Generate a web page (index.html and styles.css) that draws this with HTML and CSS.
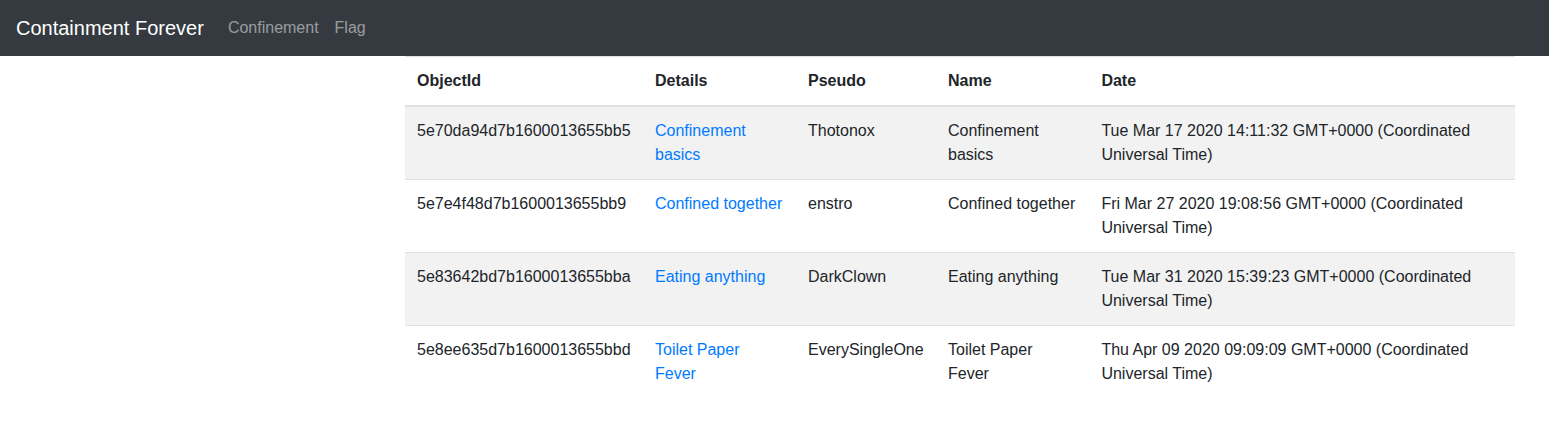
FILE: index.html
```html
<!DOCTYPE html>
<html>
<head>
<meta charset="utf-8">
<link rel="stylesheet" href="styles.css">
</head>
<body>
<nav class="navbar">
  <a class="brand" href="#">Containment Forever</a>
  <ul class="nav-links">
    <li><a href="#">Confinement</a></li>
    <li><a href="#">Flag</a></li>
  </ul>
</nav>
<main class="layout">
  <div class="content">
    <table class="table">
      <colgroup>
        <col class="c1"><col class="c2"><col class="c3"><col class="c4"><col class="c5">
      </colgroup>
      <thead>
        <tr><th>ObjectId</th><th>Details</th><th>Pseudo</th><th>Name</th><th>Date</th></tr>
      </thead>
      <tbody>
        <tr class="odd">
          <td>5e70da94d7b1600013655bb5</td>
          <td><a href="#">Confinement basics</a></td>
          <td>Thotonox</td>
          <td>Confinement basics</td>
          <td>Tue Mar 17 2020 14:11:32 GMT+0000 (Coordinated Universal Time)</td>
        </tr>
        <tr>
          <td>5e7e4f48d7b1600013655bb9</td>
          <td><a href="#">Confined together</a></td>
          <td>enstro</td>
          <td>Confined together</td>
          <td>Fri Mar 27 2020 19:08:56 GMT+0000 (Coordinated Universal Time)</td>
        </tr>
        <tr class="odd">
          <td>5e83642bd7b1600013655bba</td>
          <td><a href="#">Eating anything</a></td>
          <td>DarkClown</td>
          <td>Eating anything</td>
          <td>Tue Mar 31 2020 15:39:23 GMT+0000 (Coordinated Universal Time)</td>
        </tr>
        <tr>
          <td>5e8ee635d7b1600013655bbd</td>
          <td><a href="#">Toilet Paper Fever</a></td>
          <td>EverySingleOne</td>
          <td>Toilet Paper Fever</td>
          <td>Thu Apr 09 2020 09:09:09 GMT+0000 (Coordinated Universal Time)</td>
        </tr>
      </tbody>
    </table>
  </div>
</main>
</body>
</html>
```
FILE: styles.css
```css
* { box-sizing: border-box; }
html, body { margin: 0; padding: 0; }
body {
  font-family: "Liberation Sans", Arial, sans-serif;
  font-size: 16px;
  line-height: 1.5;
  color: #212529;
  background: #fff;
}
a { text-decoration: none; }

.navbar {
  display: flex;
  align-items: center;
  height: 56px;
  padding: 0 16px;
  background: #343a40;
}
.brand {
  color: #fff;
  font-size: 20px;
  line-height: 30px;
  margin-right: 16px;
}
.nav-links {
  display: flex;
  list-style: none;
  margin: 0;
  padding: 0;
}
.nav-links a {
  display: block;
  padding: 8px;
  color: rgba(255,255,255,.5);
  font-size: 16px;
}

.layout {
  display: flex;
  padding-left: 405px;
}
.content {
  width: 1110px;
}
.table {
  width: 100%;
  table-layout: fixed;
  border-collapse: collapse;
  margin-bottom: 16px;
}
.c1 { width: 238px; }
.c2 { width: 153px; }
.c3 { width: 140px; }
.c4 { width: 153.4px; }
.c5 { width: 425.6px; }
.table th, .table td {
  padding: 12px;
  text-align: left;
  vertical-align: top;
  border-top: 1px solid #dee2e6;
}
.table th {
  font-weight: bold;
  border-bottom: 2px solid #dee2e6;
}
.table tbody tr:first-child td { border-top: 0; }
.table tr.odd { background: rgba(0,0,0,.05); }
.table td a { color: #007bff; }
```
